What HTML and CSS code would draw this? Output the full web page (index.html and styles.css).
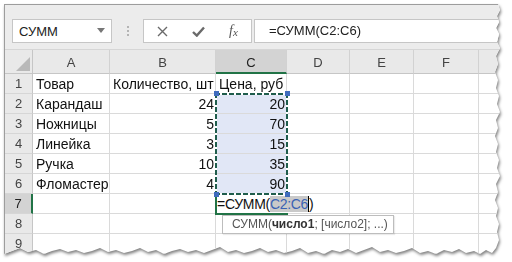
FILE: index.html
```html
<!DOCTYPE html>
<html lang="ru">
<head>
<meta charset="utf-8">
<title>СУММ</title>
<link rel="stylesheet" href="styles.css">
</head>
<body>
<div class="paper">
  <div class="sheet">
    <div class="toolbar">
      <div class="namebox">
        <span class="nb-text">СУММ</span>
        <svg class="dd" width="8" height="5" viewBox="0 0 8 5"><path d="M0 0H8L4 5Z" fill="#777"/></svg>
      </div>
      <div class="grip"><i></i><i></i><i></i></div>
      <div class="iconbox">
        <span class="slot"><svg width="11" height="11" viewBox="0 0 11 11"><path d="M1 1L10 10M10 1L1 10" stroke="#6a6a6a" stroke-width="1.4" fill="none"/></svg></span>
        <span class="slot"><svg width="13" height="11" viewBox="0 0 13 11"><path d="M1 6L4.8 9.6L12 1.5" stroke="#6a6a6a" stroke-width="2.4" fill="none"/></svg></span>
        <span class="slot fx">f<span class="fx-x">x</span></span>
      </div>
      <div class="formula">=СУММ(C2:C6)</div>
    </div>
    <div class="grid">
      <div class="corner"><span class="tri"></span></div>
      <div class="ch">A</div><div class="ch">B</div><div class="ch on">C</div><div class="ch">D</div><div class="ch">E</div><div class="ch">F</div><div class="ch"></div>

      <div class="rh">1</div><div class="c t">Товар</div><div class="c t">Количество, шт</div><div class="c t">Цена, руб</div><div class="c"></div><div class="c"></div><div class="c"></div><div class="c"></div>
      <div class="rh">2</div><div class="c t">Карандаш</div><div class="c n">24</div><div class="c n sel">20</div><div class="c"></div><div class="c"></div><div class="c"></div><div class="c"></div>
      <div class="rh">3</div><div class="c t">Ножницы</div><div class="c n">5</div><div class="c n sel">70</div><div class="c"></div><div class="c"></div><div class="c"></div><div class="c"></div>
      <div class="rh">4</div><div class="c t">Линейка</div><div class="c n">3</div><div class="c n sel">15</div><div class="c"></div><div class="c"></div><div class="c"></div><div class="c"></div>
      <div class="rh">5</div><div class="c t">Ручка</div><div class="c n">10</div><div class="c n sel">35</div><div class="c"></div><div class="c"></div><div class="c"></div><div class="c"></div>
      <div class="rh">6</div><div class="c t">Фломастер</div><div class="c n">4</div><div class="c n sel">90</div><div class="c"></div><div class="c"></div><div class="c"></div><div class="c"></div>
      <div class="rh on">7</div><div class="c"></div><div class="c"></div><div class="c"></div><div class="c"></div><div class="c"></div><div class="c"></div><div class="c"></div>
      <div class="rh">8</div><div class="c"></div><div class="c"></div><div class="c"></div><div class="c"></div><div class="c"></div><div class="c"></div><div class="c"></div>
      <div class="rh">9</div><div class="c"></div><div class="c"></div><div class="c"></div><div class="c"></div><div class="c"></div><div class="c"></div><div class="c"></div>

      <div class="active"></div>
      <div class="edit">=СУММ(<span class="ref">C2:C6</span><span class="caret"></span>)</div>
      <div class="range"><i class="hd tl"></i><i class="hd tr"></i><i class="hd bl"></i><i class="hd br"></i></div>
      <div class="tip">СУММ(<b>число1</b>; [число2]; ...)</div>
    </div>
  </div>
</div>
</body>
</html>
```
FILE: styles.css
```css
* { box-sizing: border-box; }
html, body { margin: 0; padding: 0; background: #fff; }
body { width: 512px; height: 262px; overflow: hidden; font-family: "Liberation Sans", Arial, sans-serif; }

.paper {
  margin: 4px 0 0 4px;
  width: 504px;
  height: 257px;
  filter: drop-shadow(1px 2px 1.5px rgba(0,0,0,0.5));
}
.sheet {
  width: 100%;
  height: 100%;
  background: #fff;
  border-left: 1px solid #9d9d9d;
  border-top: 1px solid #9d9d9d;
  overflow: hidden;
  clip-path: polygon(0 0, 494px 0, 496px 6px, 493px 12px, 495px 18px, 492px 24px, 495px 30px, 493px 38px, 496px 44px, 492px 52px, 494px 60px, 491px 68px, 494px 76px, 492px 84px, 495px 92px, 493px 100px, 496px 108px, 492px 116px, 494px 124px, 491px 132px, 494px 140px, 492px 148px, 495px 156px, 493px 164px, 496px 172px, 492px 180px, 494px 188px, 491px 196px, 494px 204px, 492px 212px, 495px 220px, 493px 228px, 495px 236px, 492px 244px, 488px 249px, 482px 246px, 476px 250px, 470px 247px, 462px 249px, 455px 245px, 448px 248px, 440px 246px, 432px 250px, 424px 247px, 416px 249px, 408px 244px, 400px 247px, 392px 249px, 384px 246px, 376px 248px, 368px 243px, 360px 246px, 352px 249px, 344px 245px, 336px 248px, 328px 246px, 320px 250px, 312px 247px, 304px 249px, 296px 244px, 288px 247px, 280px 249px, 272px 246px, 264px 248px, 256px 244px, 248px 247px, 240px 249px, 232px 246px, 224px 248px, 216px 243px, 208px 246px, 200px 249px, 192px 246px, 184px 248px, 176px 245px, 168px 247px, 160px 250px, 152px 246px, 144px 248px, 136px 244px, 128px 247px, 120px 249px, 112px 246px, 104px 248px, 96px 244px, 88px 247px, 80px 249px, 72px 246px, 64px 248px, 56px 245px, 48px 247px, 40px 250px, 32px 246px, 24px 248px, 16px 244px, 8px 247px, 0 250px);
}

/* toolbar */
.toolbar {
  height: 45px;
  background: #ececec;
  border-bottom: 1px solid #d6d6d6;
  display: flex;
  align-items: flex-start;
  padding: 14px 0 0 7px;
  white-space: nowrap;
}
.namebox {
  width: 100px;
  height: 24px;
  background: #fff;
  border: 1px solid #c6c6c6;
  display: flex;
  align-items: center;
  justify-content: space-between;
  padding: 0 6px 0 6px;
  font-size: 13px;
  color: #222;
}
.dd { margin-top: -1px; }
.grip {
  width: 31px;
  height: 24px;
  display: flex;
  flex-direction: column;
  align-items: center;
  justify-content: center;
  gap: 2px;
}
.grip i { display: block; width: 2px; height: 2px; background: #b4b4b4; }
.iconbox {
  width: 109px;
  height: 24px;
  background: #fff;
  border: 1px solid #c6c6c6;
  display: flex;
  align-items: center;
}
.slot {
  width: 36px;
  height: 22px;
  display: flex;
  align-items: center;
  justify-content: center;
}
.slot:first-child { width: 38px; }
.fx {
  font-family: "Liberation Serif", "Times New Roman", serif;
  font-style: italic;
  font-size: 14px;
  color: #555;
}
.fx-x { font-size: 11px; position: relative; top: 1px; }
.formula {
  flex: 1;
  margin-left: 2px;
  height: 24px;
  background: #fff;
  border: 1px solid #c6c6c6;
  border-right: none;
  padding-left: 14px;
  font-size: 13px;
  line-height: 22px;
  color: #222;
}

/* grid */
.grid {
  position: relative;
  display: grid;
  grid-template-columns: 28px 77px 106px 71px 63px 64px 65px 64px;
  grid-template-rows: 24px;
  grid-auto-rows: 20px;
  width: 538px;
  font-size: 14px;
  color: #111;
}
.corner, .ch, .rh {
  background: #e9e9e9;
  color: #444;
  font-size: 13px;
}
.corner {
  position: relative;
  border-right: 1px solid #c6c6c6;
  border-bottom: 1px solid #c6c6c6;
}
.tri {
  position: absolute;
  right: 2px;
  bottom: 2px;
  width: 0;
  height: 0;
  border-left: 14px solid transparent;
  border-bottom: 14px solid #b9b9b9;
}
.ch {
  border-right: 1px solid #d2d2d2;
  border-bottom: 1px solid #c6c6c6;
  text-align: center;
  line-height: 25px;
}
.ch.on {
  background: #d3d3d3;
  color: #222;
  border-bottom: 2px solid #217346;
}
.rh {
  border-right: 1px solid #c6c6c6;
  border-bottom: 1px solid #d6d6d6;
  text-align: center;
  line-height: 20px;
}
.rh.on {
  background: #d3d3d3;
  color: #222;
  border-right: 2px solid #217346;
}
.c {
  border-right: 1px solid #dadada;
  border-bottom: 1px solid #dadada;
  line-height: 20px;
  white-space: nowrap;
  overflow: visible;
}
.t { padding-left: 3px; }
.n { text-align: right; padding-right: 1px; }
.sel { background: #e1e7f6; }

.active {
  position: absolute;
  left: 210px;
  top: 143px;
  width: 73px;
  height: 22px;
  border: 2px solid #217346;
}
.edit {
  position: absolute;
  left: 212px;
  top: 145px;
  height: 18px;
  line-height: 18px;
  padding-right: 3px;
  background: #fff;
  font-size: 14px;
  letter-spacing: -0.3px;
  color: #111;
  white-space: nowrap;
}
.ref { color: #3a62b4; background: #c9c9c9; }
.caret {
  display: inline-block;
  width: 1px;
  height: 16px;
  background: #000;
  vertical-align: -3px;
}
.range {
  position: absolute;
  left: 210px;
  top: 43px;
  width: 73px;
  height: 102px;
  background:
    repeating-linear-gradient(90deg, #1f5d4c 0 5px, #fff 5px 7px) top left / 100% 2px no-repeat,
    repeating-linear-gradient(90deg, #1f5d4c 0 5px, #fff 5px 7px) bottom left / 100% 2px no-repeat,
    repeating-linear-gradient(180deg, #1f5d4c 0 5px, #fff 5px 7px) top left / 2px 100% no-repeat,
    repeating-linear-gradient(180deg, #1f5d4c 0 5px, #fff 5px 7px) top right / 2px 100% no-repeat;
}
.hd {
  position: absolute;
  width: 5px;
  height: 5px;
  background: #3f6bbd;
}
.tl { left: -1px; top: -2px; }
.tr { right: -2px; top: -2px; }
.bl { left: -1px; bottom: -2px; }
.br { right: -2px; bottom: -2px; }

.tip {
  position: absolute;
  left: 217px;
  top: 165px;
  width: 172px;
  height: 19px;
  background: #fff;
  border: 1px solid #bdbdbd;
  box-shadow: 1px 1px 1px rgba(0,0,0,0.08);
  padding-left: 9px;
  font-size: 12px;
  line-height: 17px;
  color: #555;
  white-space: nowrap;
}
.tip b { color: #333; }
```
